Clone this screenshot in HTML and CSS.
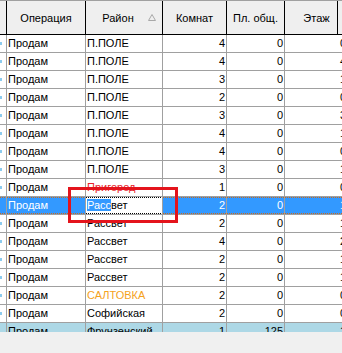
FILE: index.html
```html
<html>
<head>
    <meta charset="utf-8">
    <title>Объекты</title>
    <link rel="stylesheet" href="styles.css">
</head>
<body>
    <div class="grid">
        <div class="head">
            <div class="hc"></div>
            <div class="hc">Операция</div>
            <div class="hc sorted"><span>Район</span><svg width="8" height="7" viewBox="0 0 8 7"><path d="M4 0.5 L7.5 6.5 L0.5 6.5 Z" fill="none" stroke="#a8a8a8" stroke-width="1"/></svg></div>
            <div class="hc">Комнат</div>
            <div class="hc">Пл. общ.</div>
            <div class="hc last">Этаж</div>
        </div>
        <div class="rows">
            <div class="row"><div class="ind"><i></i></div><div>Продам</div><div>П.ПОЛЕ</div><div class="num">4</div><div class="num">0</div><div class="num">0</div></div>
            <div class="row"><div class="ind"><i></i></div><div>Продам</div><div>П.ПОЛЕ</div><div class="num">4</div><div class="num">0</div><div class="num">4</div></div>
            <div class="row"><div class="ind"><i></i></div><div>Продам</div><div>П.ПОЛЕ</div><div class="num">3</div><div class="num">0</div><div class="num">1</div></div>
            <div class="row"><div class="ind"><i></i></div><div>Продам</div><div>П.ПОЛЕ</div><div class="num">2</div><div class="num">0</div><div class="num">0</div></div>
            <div class="row"><div class="ind"><i></i></div><div>Продам</div><div>П.ПОЛЕ</div><div class="num">3</div><div class="num">0</div><div class="num">3</div></div>
            <div class="row"><div class="ind"><i></i></div><div>Продам</div><div>П.ПОЛЕ</div><div class="num">4</div><div class="num">0</div><div class="num">1</div></div>
            <div class="row"><div class="ind"><i></i></div><div>Продам</div><div>П.ПОЛЕ</div><div class="num">4</div><div class="num">0</div><div class="num">0</div></div>
            <div class="row"><div class="ind"><i></i></div><div>Продам</div><div>П.ПОЛЕ</div><div class="num">3</div><div class="num">0</div><div class="num">1</div></div>
            <div class="row"><div class="ind"><i></i></div><div>Продам</div><div class="red">Пригород</div><div class="num">1</div><div class="num">0</div><div class="num">0</div></div>
            <div class="row sel"><div class="ind"></div><div>Продам</div><div class="edit"><span class="hl">Расс</span>вет</div><div class="num">2</div><div class="num">0</div><div class="num">1</div></div>
            <div class="row"><div class="ind"><i></i></div><div>Продам</div><div>Рассвет</div><div class="num">2</div><div class="num">0</div><div class="num">1</div></div>
            <div class="row"><div class="ind"><i></i></div><div>Продам</div><div>Рассвет</div><div class="num">4</div><div class="num">0</div><div class="num">2</div></div>
            <div class="row"><div class="ind"><i></i></div><div>Продам</div><div>Рассвет</div><div class="num">2</div><div class="num">0</div><div class="num">1</div></div>
            <div class="row"><div class="ind"><i></i></div><div>Продам</div><div>Рассвет</div><div class="num">2</div><div class="num">0</div><div class="num">1</div></div>
            <div class="row"><div class="ind"><i></i></div><div>Продам</div><div class="orange">САЛТОВКА</div><div class="num">2</div><div class="num">0</div><div class="num">0</div></div>
            <div class="row"><div class="ind"><i></i></div><div>Продам</div><div>Софийская</div><div class="num">2</div><div class="num">0</div><div class="num">0</div></div>
            <div class="row blue"><div class="ind"></div><div>Продам</div><div>Фрунзенский</div><div class="num">1</div><div class="num">125</div><div class="num">1</div></div>
        </div>
        <!-- пометка красной рамкой -->
        <div class="mark"></div>
    </div>
</body>
</html>
```

FILE: styles.css
```css
* {
    margin: 0;
    padding: 0;
    box-sizing: border-box;
}

body {
    background: #f0f0f0;
    font-family: "Liberation Sans", Arial, sans-serif;
    font-size: 11px;
    color: #000;
}

.grid {
    position: relative;
    width: 342px;
    height: 332px;
    overflow: hidden;
    background: #fff;
}

.head,
.row {
    display: grid;
    grid-template-columns: 7px 79px 77px 64px 58px 63px;
    width: 348px;
}

.head {
    height: 35px;
    background: #efefef;
    border-top: 1px solid #a0a0a0;
    border-bottom: 1px solid #000;
}

.hc {
    border-right: 1px solid #000;
    display: flex;
    align-items: center;
    justify-content: center;
    white-space: nowrap;
}

.hc.sorted {
    padding: 0 6px 0 0;
}

.hc.sorted span {
    flex: 1;
    text-align: center;
    padding-left: 2px;
}

.hc.last {
    position: relative;
    border-right: none;
}

.hc.last::after {
    content: "";
    position: absolute;
    top: 0;
    bottom: 0;
    left: 52px;
    border-left: 1px solid #000;
}

.row > div {
    height: 18px;
    line-height: 17px;
    border-right: 1px solid #a0a0a0;
    border-bottom: 1px solid #a0a0a0;
    padding: 0 2px 0 1px;
    white-space: nowrap;
    overflow: hidden;
}

.row > .num {
    text-align: right;
    padding: 0 1px 0 0;
}

.row > .ind {
    padding: 0;
}

.ind i {
    display: block;
    width: 2px;
    height: 3px;
    margin-top: 7px;
    background: #8ccbee;
}

.red {
    color: #e8242c;
}

.orange {
    color: #f5a21c;
}

.row.sel > div {
    background-color: #3399ff;
    color: #fff;
    background-image: linear-gradient(90deg, #c86a1e 50%, transparent 50%), linear-gradient(90deg, #c86a1e 50%, transparent 50%);
    background-size: 2px 1px, 2px 1px;
    background-repeat: repeat-x;
    background-position: 0 0, 0 16px;
}

.row.sel > .edit {
    background-color: #fff;
    color: #000;
    background-image: linear-gradient(90deg, #000 50%, transparent 50%), linear-gradient(90deg, #000 50%, transparent 50%);
}

.hl {
    background: #3399ff;
    color: #fff;
}

.row.blue > div {
    background: #add8e6;
}

.mark {
    position: absolute;
    left: 68px;
    top: 187px;
    width: 110px;
    height: 36px;
    border: 3px solid #e4141c;
}
```
